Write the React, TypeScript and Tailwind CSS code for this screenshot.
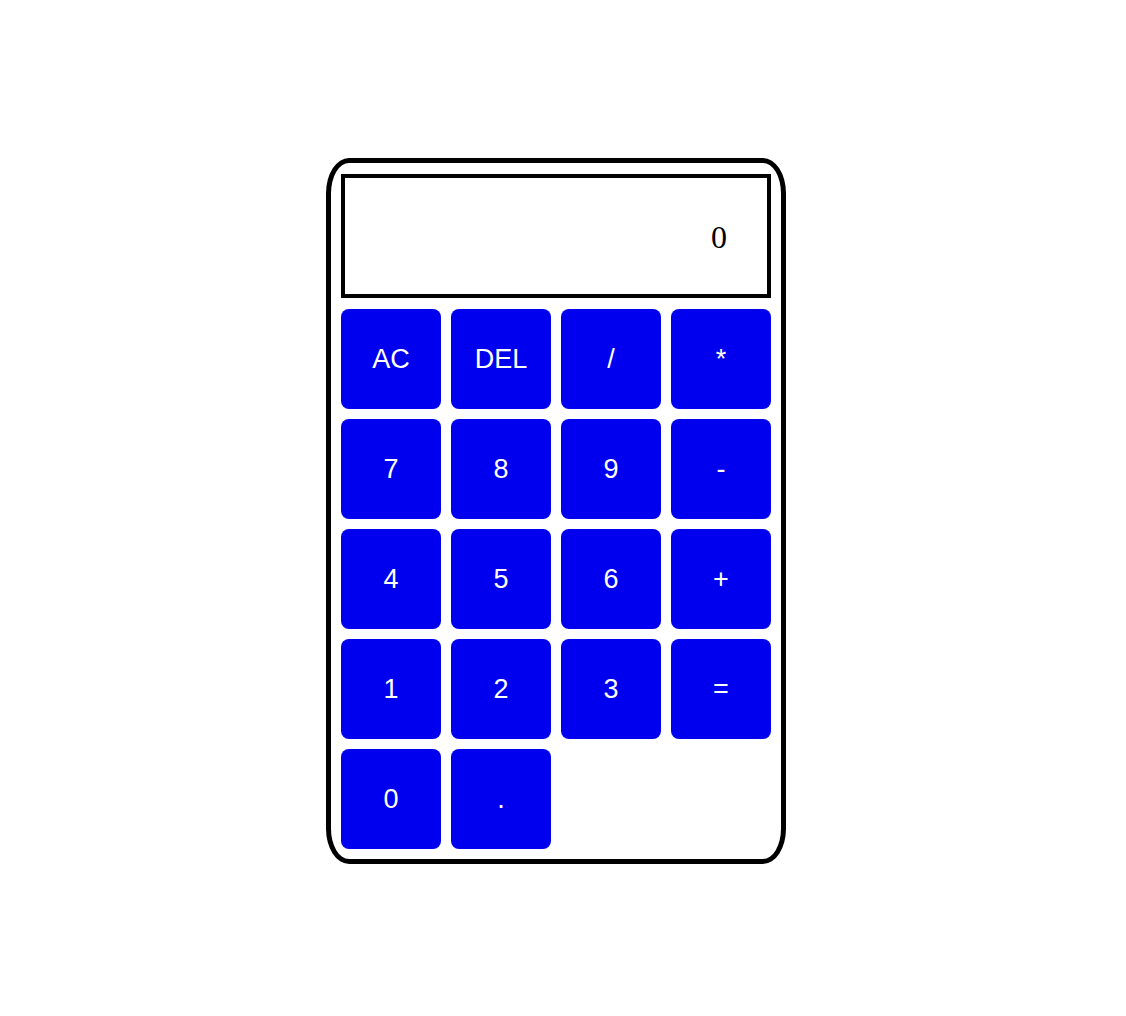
import React from "react";

const keys = ["AC", "DEL", "/", "*", "7", "8", "9", "-", "4", "5", "6", "+", "1", "2", "3", "=", "0", "."];

export default function App() {
  return (
    <div className="min-h-[1016px] w-[1126px] bg-white">
      <div className="h-[158px]" />
      <div className="ml-[326px] box-border flex w-[460px] flex-col rounded-[5%] border-[5px] border-black bg-white px-[10px] pt-[11px] pb-[10px]">
        <div
          className="box-border flex h-[124px] w-[430px] items-center justify-end border-[4px] border-black pr-[40px] pt-[2px] text-[32px] text-black"
          style={{ fontFamily: '"Liberation Serif", "Times New Roman", serif' }}
        >
          0
        </div>
        <div className="mt-[11px] grid grid-cols-[repeat(4,100px)] grid-rows-[repeat(5,100px)] gap-[10px]">
          {keys.map((k) => (
            <button
              key={k}
              className="flex h-[100px] w-[100px] items-center justify-center rounded-[8px] bg-[#0000ee] text-[27px] text-white"
              style={{ fontFamily: '"Liberation Sans", Arial, sans-serif' }}
            >
              {k}
            </button>
          ))}
        </div>
      </div>
    </div>
  );
}
